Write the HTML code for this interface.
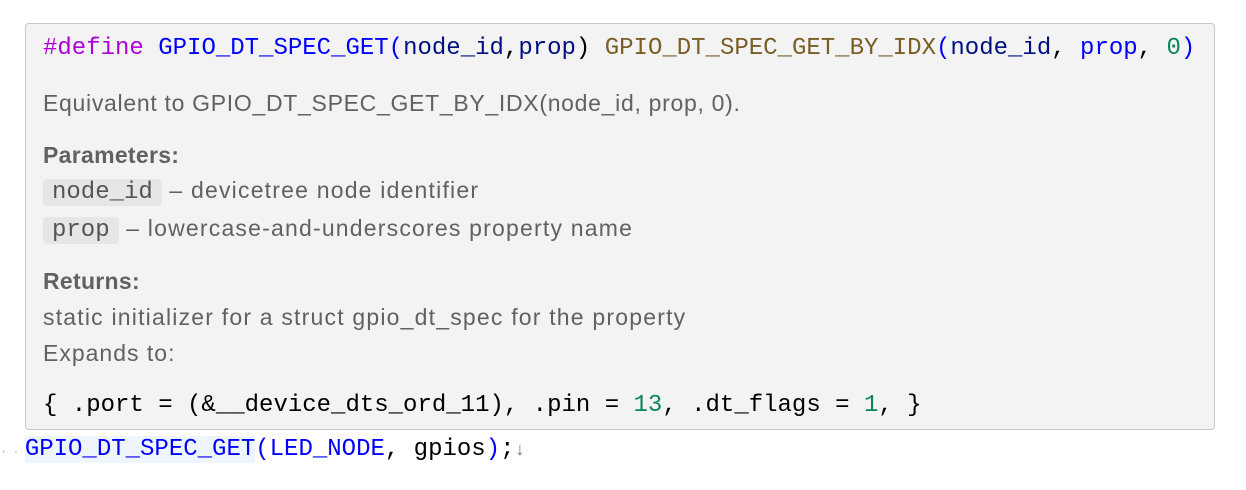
<!DOCTYPE html>
<html><head><style>
body{margin:0;width:1246px;height:490px;background:#fff;position:relative;overflow:hidden;font-family:"Liberation Sans",sans-serif;}
.box{position:absolute;left:25px;top:23px;width:1190px;height:407px;background:#f3f3f3;border:1px solid #c8c8c8;border-radius:4px;box-sizing:border-box;}
.m{font-family:"Liberation Mono","DejaVu Sans Mono",monospace;font-size:24px;white-space:pre;position:absolute;left:17px;line-height:30px;}
.s{position:absolute;left:17px;font-size:23px;letter-spacing:1.2px;color:#616161;white-space:pre;line-height:30px;}
.pill{font-family:"Liberation Mono",monospace;font-size:24px;letter-spacing:0;background:#e6e6e6;border-radius:4px;padding:0 9px;color:#555;}
.k{color:#af00db}.f{color:#0000ff}.p{color:#001080}.b{color:#795e26}.n{color:#098658}
</style></head><body>
<div class="box">
<div class="m" style="top:10px;color:#000"><span class="k">#define</span> <span class="f">GPIO_DT_SPEC_GET</span><span class="f">(</span><span class="p">node_id</span>,<span class="p">prop</span>) <span class="b">GPIO_DT_SPEC_GET_BY_IDX</span><span class="f">(</span><span class="p">node_id</span>, <span class="f">prop</span>, <span class="n">0</span><span class="f">)</span></div>
<div class="s" style="top:64px;letter-spacing:0.7px">Equivalent to GPIO_DT_SPEC_GET_BY_IDX(node_id, prop, 0).</div>
<div class="s" style="top:116px;font-weight:bold;letter-spacing:0.3px">Parameters:</div>
<div class="s" style="top:151px;left:17px"><span class="pill">node_id</span> – devicetree node identifier</div>
<div class="s" style="top:189px;left:17px"><span class="pill">prop</span> – lowercase-and-underscores property name</div>
<div class="s" style="top:242px;font-weight:bold;letter-spacing:0.3px">Returns:</div>
<div class="s" style="top:278px">static initializer for a struct gpio_dt_spec for the property</div>
<div class="s" style="top:314px;letter-spacing:1px">Expands to:</div>
<div class="m" style="top:367px;color:#000">{ .port = (&amp;__device_dts_ord_11), .pin = <span class="n">13</span>, .dt_flags = <span class="n">1</span>, }</div>
</div>
<div style="position:absolute;left:0;top:435px;font-family:'Liberation Mono',monospace;font-size:24px;white-space:pre;line-height:30px;color:#000"><span style="color:#bbb;font-size:12px;letter-spacing:-1px">· · </span><span style="background:#eef5fd"><span class="f">GPIO_DT_SPEC_GET</span></span><span class="f">(</span><span class="f">LED_NODE</span>, gpios<span class="f">)</span>;<span style="color:#777;font-size:18px">↓</span></div>
</body></html>
